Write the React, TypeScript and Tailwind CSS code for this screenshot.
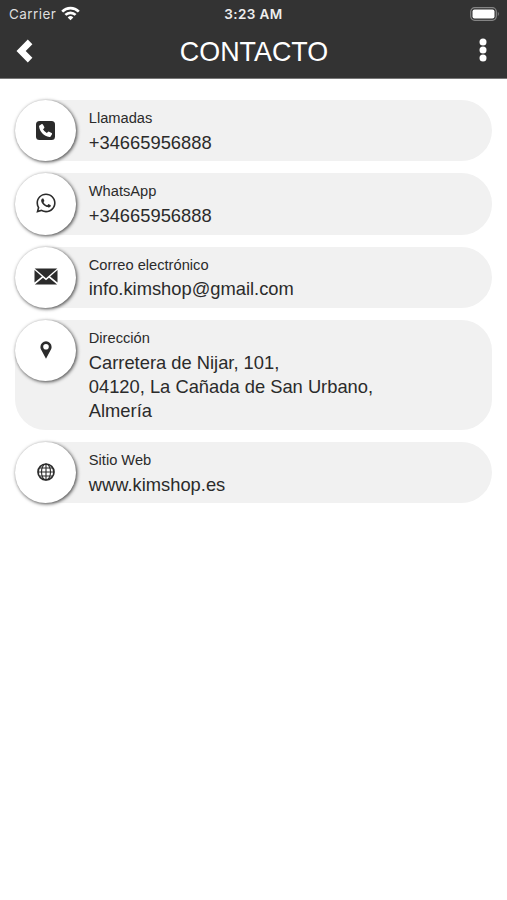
import React from 'react';
import { FaWhatsapp } from 'react-icons/fa';

const PhoneIcon: React.FC = () => (
  <svg viewBox="0 0 19 19" className="size-[19px]">
    <rect width="19" height="19" rx="3.5" fill="currentColor" />
    <path
      d="M3.500 4.600 5.800 3.100q.7-.3 1.100.4L8.300 6q.3.700-.2 1.200L7 8.200q1.200 2.400 3.800 3.800l1.100-1.100q.5-.5 1.200-.2l2.500 1.400q.7.400.4 1.100l-1.400 2.200q-.4.600-1.200.5C7.800 15 4 11.100 3.100 5.700q-.1-.7.4-1.100z"
      fill="white"
    />
  </svg>
);

const EnvelopeIcon: React.FC = () => (
  <svg viewBox="0 0 24 17" className="h-[17px] w-6" fill="currentColor">
    <path d="M.7.5h22.600L12 10.300z" />
    <path d="M.5 2 7.900 8.500.5 14.500z" />
    <path d="M23.500 2 16.100 8.500l7.400 6z" />
    <path d="M.9 16.500 9 9.700l3 2.600 3-2.600 8.100 6.800z" />
  </svg>
);

const MarkerIcon: React.FC = () => (
  <svg viewBox="0 0 12 18" className="h-[18px] w-3" fill="currentColor">
    <path
      fillRule="evenodd"
      d="M6 .3A5.600 5.600 0 0 0 .4 5.900c0 1.400.6 2.600 1.200 3.700L6 17.700l4.400-8.100c.6-1.100 1.200-2.300 1.200-3.700A5.600 5.600 0 0 0 6 .3zM6 2.900a2.800 2.800 0 1 1 0 5.600 2.800 2.800 0 0 1 0-5.600z"
    />
  </svg>
);

const GlobeIcon: React.FC = () => (
  <svg viewBox="0 0 18 18" className="size-[18px]" fill="none" stroke="currentColor" strokeWidth="1.1">
    <circle cx="9" cy="9" r="8" strokeWidth="1.7" />
    <ellipse cx="9" cy="9" rx="4.5" ry="8" />
    <path d="M9 1v16M1 9h16M2.400 5h13.200M2.400 13h13.200" />
  </svg>
);

const WifiIcon: React.FC = () => (
  <svg viewBox="0 0 19 15" className="h-[15px] w-[19px]" fill="none" stroke="currentColor" strokeWidth="2.7">
    <path d="M1.200 5.600a11.800 11.800 0 0 1 16.600 0" />
    <path d="M4.400 8.900a7.200 7.200 0 0 1 10.200 0" />
    <path d="M9.500 14.200 6.700 11.400a4 4 0 0 1 5.600 0z" fill="currentColor" stroke="none" />
  </svg>
);

const contacts = [
  { label: 'Llamadas', lines: ['+34665956888'], icon: <PhoneIcon /> },
  { label: 'WhatsApp', lines: ['+34665956888'], icon: <FaWhatsapp className="size-[22px]" /> },
  { label: 'Correo electrónico', lines: ['info.kimshop@gmail.com'], icon: <EnvelopeIcon /> },
  {
    label: 'Dirección',
    lines: ['Carretera de Nijar, 101,', '04120, La Cañada de San Urbano,', 'Almería'],
    icon: <MarkerIcon />,
  },
  { label: 'Sitio Web', lines: ['www.kimshop.es'], icon: <GlobeIcon /> },
];

const App: React.FC = () => {
  return (
    <div className="min-h-[900px] bg-white font-['Liberation_Sans',sans-serif] text-[#2b2b2b]">
      <header className="h-[79px] border-b border-[#777] bg-[#333] text-white">
        <div className="grid h-[27px] grid-cols-3 items-center pr-[7px] pl-[9px] font-['Inter',sans-serif] text-[13.5px]">
          <div className="flex items-center gap-[5px]">
            <span className="pt-px tracking-[0.45px] text-[#dedede]">Carrier</span>
            <WifiIcon />
          </div>
          <span className="pt-px pr-[2px] text-center font-semibold tracking-[0.4px] text-[#eee]">3:23 AM</span>
          <div className="flex items-center justify-end">
            <svg viewBox="0 0 30 14" className="h-3.5 w-[30px]">
              <rect x=".7" y=".7" width="25.6" height="12.6" rx="4" fill="none" stroke="#858585" strokeWidth="1.2" />
              <rect x="2.5" y="2.5" width="22" height="9" rx="2" fill="white" />
              <path d="M27.800 4.800q2 2.200 0 4.400z" fill="#858585" />
            </svg>
          </div>
        </div>
        <div className="flex h-12 items-center justify-between pr-5 pl-4">
          <svg viewBox="0 0 17 24" className="h-6 w-[17px]" fill="white">
            <path d="M11.800.6 16.400 5.200 9.700 12l6.700 6.800-4.600 4.600L.5 12z" />
          </svg>
          <h1 className="pt-[2px] pr-[4px] text-[26.9px] leading-none">CONTACTO</h1>
          <svg viewBox="0 0 8 24" className="mb-[2px] h-6 w-2" fill="white">
            <circle cx="4" cy="4" r="3.5" />
            <circle cx="4" cy="12" r="3.5" />
            <circle cx="4" cy="20" r="3.5" />
          </svg>
        </div>
      </header>

      <main className="flex flex-col gap-[12.2px] pt-[21px] pr-[15px] pl-[15px]">
        {contacts.map((item) => (
          <div key={item.label} className="flex items-start gap-[12.6px] rounded-[30.6px] bg-[#f1f1f1]">
            <div className="flex size-[61.2px] shrink-0 items-center justify-center rounded-full bg-white pb-px pl-[0.6px] shadow-[1px_1px_3.5px_0.3px_rgba(0,0,0,0.65)]">
              {item.icon}
            </div>
            <div className="pt-[6.1px] pb-[6.2px] leading-[24.4px]">
              <p className="text-[14.66px]">{item.label}</p>
              {item.lines.map((line) => (
                <p key={line} className="text-[18.33px]">
                  {line}
                </p>
              ))}
            </div>
          </div>
        ))}
      </main>
    </div>
  );
};

export default App;
